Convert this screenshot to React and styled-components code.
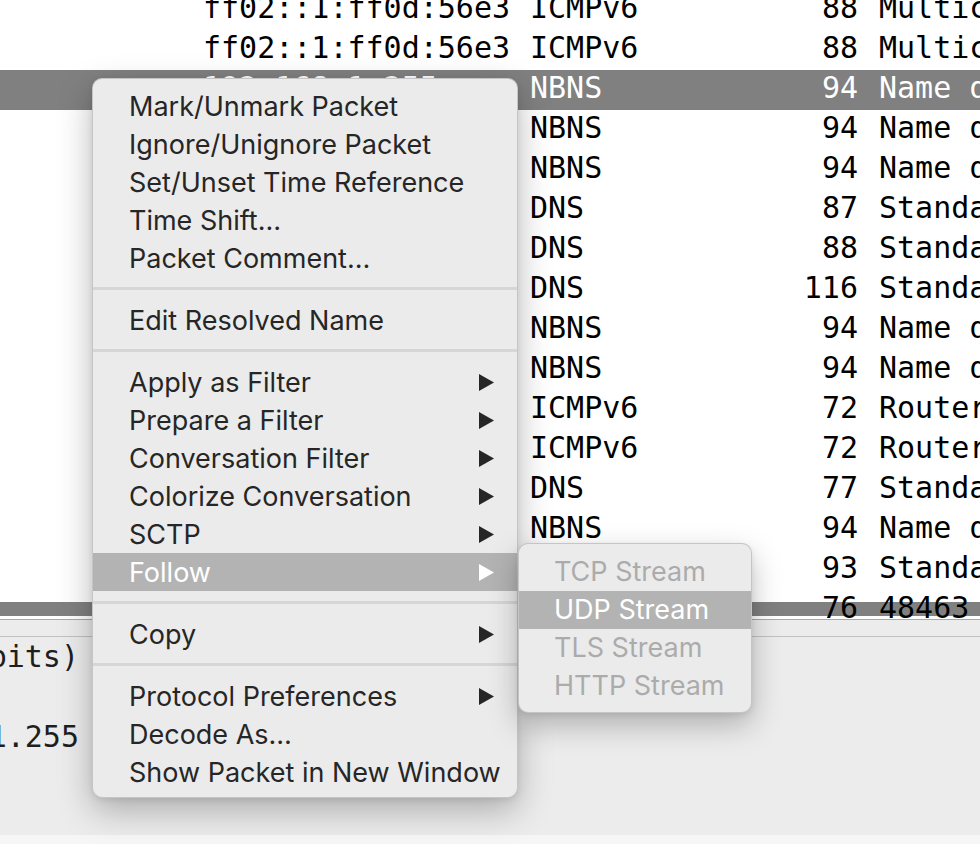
import React from 'react'
import styled, { createGlobalStyle } from 'styled-components'

const GlobalStyle = createGlobalStyle`
  html, body {
    margin: 0;
    padding: 0;
    overflow: hidden;
    background: #ececec;
  }
  * {
    box-sizing: border-box;
  }
`

const packets = [
  { dst: 'ff02::1:ff0d:56e3', proto: 'ICMPv6', len: 88, info: 'Multicast Listener Report Message v2' },
  { dst: 'ff02::1:ff0d:56e3', proto: 'ICMPv6', len: 88, info: 'Multicast Listener Report Message v2' },
  { dst: '192.168.1.255', proto: 'NBNS', len: 94, info: 'Name query NB WPAD<00>', selected: true },
  { dst: '192.168.1.255', proto: 'NBNS', len: 94, info: 'Name query NB WPAD<00>' },
  { dst: '192.168.1.255', proto: 'NBNS', len: 94, info: 'Name query NB WPAD<00>' },
  { dst: '192.168.1.1', proto: 'DNS', len: 87, info: 'Standard query 0x1a2b A' },
  { dst: '192.168.1.1', proto: 'DNS', len: 88, info: 'Standard query 0x3c4d A' },
  { dst: '192.168.1.6', proto: 'DNS', len: 116, info: 'Standard query response' },
  { dst: '192.168.1.255', proto: 'NBNS', len: 94, info: 'Name query NB WPAD<00>' },
  { dst: '192.168.1.255', proto: 'NBNS', len: 94, info: 'Name query NB WPAD<00>' },
  { dst: 'ff02::2', proto: 'ICMPv6', len: 72, info: 'Router Solicitation' },
  { dst: 'ff02::2', proto: 'ICMPv6', len: 72, info: 'Router Solicitation' },
  { dst: '192.168.1.1', proto: 'DNS', len: 77, info: 'Standard query 0x5e6f A' },
  { dst: '192.168.1.255', proto: 'NBNS', len: 94, info: 'Name query NB WPAD<00>' },
  { dst: '192.168.1.1', proto: 'DNS', len: 93, info: 'Standard query 0x7a8b AAAA' },
  { dst: '239.255.255.250', proto: 'UDP', len: 76, info: '48463 → 1900 Len=34' },
]

const menuItems = [
  { label: 'Mark/Unmark Packet' },
  { label: 'Ignore/Unignore Packet' },
  { label: 'Set/Unset Time Reference' },
  { label: 'Time Shift…' },
  { label: 'Packet Comment…' },
  { separator: true },
  { label: 'Edit Resolved Name' },
  { separator: true },
  { label: 'Apply as Filter', sub: true },
  { label: 'Prepare a Filter', sub: true },
  { label: 'Conversation Filter', sub: true },
  { label: 'Colorize Conversation', sub: true },
  { label: 'SCTP', sub: true },
  { label: 'Follow', sub: true, active: true },
  { separator: true },
  { label: 'Copy', sub: true },
  { separator: true },
  { label: 'Protocol Preferences', sub: true },
  { label: 'Decode As…' },
  { label: 'Show Packet in New Window' },
]

const followItems = [
  { label: 'TCP Stream', disabled: true },
  { label: 'UDP Stream', active: true },
  { label: 'TLS Stream', disabled: true },
  { label: 'HTTP Stream', disabled: true },
]

const Arrow = () => (
  <svg width="15" height="17" viewBox="0 0 15 17">
    <polygon points="0,0 15,8.5 0,17" fill="currentColor" />
  </svg>
)

export default function App() {
  return (
    <Window>
      <GlobalStyle />
      <PacketList>
        <Rows>
          {packets.map((p, i) => (
            <Row key={i} selected={p.selected}>
              <span />
              <Cell>{p.dst}</Cell>
              <Cell>{p.proto}</Cell>
              <Length>{p.len}</Length>
              <Info>{p.info}</Info>
            </Row>
          ))}
        </Rows>
      </PacketList>
      <Splitter />
      <DetailPane>
        <DetailLine>
          <DetailText>▸ Frame 3: 94 bytes on wire (752 bits), 94 bytes captured (752 bits)</DetailText>
        </DetailLine>
        <DetailLine />
        <DetailLine>
          <DetailText>▸ Internet Protocol Version 4, Src: 192.168.1.6, Dst: 192.168.1.255</DetailText>
        </DetailLine>
      </DetailPane>
      <BottomPane />

      <Menu>
        {menuItems.map((item, i) =>
          item.separator ? (
            <Separator key={i} />
          ) : (
            <MenuItem key={i} active={item.active}>
              <span>{item.label}</span>
              {item.sub && (
                <ArrowBox>
                  <Arrow />
                </ArrowBox>
              )}
              {item.label === 'Follow' && (
                <SubMenu>
                  {followItems.map((s) => (
                    <SubItem key={s.label} active={s.active} disabled={s.disabled}>
                      {s.label}
                    </SubItem>
                  ))}
                </SubMenu>
              )}
            </MenuItem>
          )
        )}
      </Menu>
    </Window>
  )
}

const Window = styled.div`
  position: relative;
  width: 980px;
  height: 844px;
  display: flex;
  flex-direction: column;
  overflow: hidden;
  background: #ececec;
`

const PacketList = styled.div`
  height: 620px;
  flex: none;
  overflow: hidden;
  border-bottom: 1px solid #a9a9a9;
  background: linear-gradient(
    to bottom,
    #ffffff 0,
    #ffffff 602px,
    #808080 602px,
    #808080 616px,
    #ffffff 616px
  );
`

const Rows = styled.div`
  margin-top: -10px;
`

const Row = styled.div`
  display: grid;
  grid-template-columns: 203px 327px 256px 72px 1fr;
  height: 40px;
  line-height: 36px;
  font-family: "DejaVu Sans Mono", "Liberation Mono", monospace;
  font-size: 30px;
  white-space: nowrap;
  color: ${(p) => (p.selected ? '#ffffff' : '#000000')};
  background: ${(p) => (p.selected ? '#808080' : 'transparent')};
`

const Cell = styled.span`
  overflow: hidden;
`

const Length = styled.span`
  text-align: right;
`

const Info = styled.span`
  padding-left: 21px;
  overflow: hidden;
`

const Splitter = styled.div`
  height: 17px;
  flex: none;
  background: #ececec;
  border-bottom: 1px solid #c2c2c2;
`

const DetailPane = styled.div`
  height: 198px;
  flex: none;
  padding-top: 1px;
  background: #ececec;
`

const DetailLine = styled.div`
  height: 40px;
  width: 79px;
  display: flex;
  justify-content: flex-end;
  overflow: hidden;
`

const DetailText = styled.span`
  flex: none;
  white-space: nowrap;
  line-height: 38px;
  font-family: "DejaVu Sans Mono", "Liberation Mono", monospace;
  font-size: 30px;
  color: #1e1e1e;
`

const BottomPane = styled.div`
  flex: 1;
  background: #f6f6f6;
`

const Menu = styled.div`
  position: absolute;
  top: 78px;
  left: 92px;
  width: 426px;
  padding: 8px 0 6px;
  background: #ebebeb;
  border: 1px solid rgba(0, 0, 0, 0.16);
  border-radius: 10px;
  box-shadow: 0 12px 34px rgba(0, 0, 0, 0.28), 0 2px 6px rgba(0, 0, 0, 0.08);
  font-family: Inter, "Noto Sans", sans-serif;
  font-size: 27px;
  color: #262626;
`

const MenuItem = styled.div`
  position: relative;
  display: flex;
  align-items: center;
  height: 38px;
  padding: 0 23px 0 36px;
  white-space: nowrap;
  color: ${(p) => (p.active ? '#ffffff' : '#262626')};
  background: ${(p) => (p.active ? '#b3b3b3' : 'transparent')};
`

const ArrowBox = styled.span`
  display: flex;
  margin-left: auto;
  color: inherit;
`

const Separator = styled.div`
  height: 3px;
  margin: 10px 0 11px;
  background: #d6d6d6;
`

const SubMenu = styled.div`
  position: absolute;
  top: -10px;
  left: calc(100% + 1px);
  width: 234px;
  padding: 9px 0 7px;
  background: #ebebeb;
  border: 1px solid rgba(0, 0, 0, 0.16);
  border-radius: 10px;
  box-shadow: 0 12px 30px rgba(0, 0, 0, 0.26), 0 2px 6px rgba(0, 0, 0, 0.08);
`

const SubItem = styled.div`
  height: 38px;
  line-height: 38px;
  padding-left: 35px;
  white-space: nowrap;
  color: ${(p) => (p.active ? '#ffffff' : p.disabled ? '#ababab' : '#262626')};
  background: ${(p) => (p.active ? '#b3b3b3' : 'transparent')};
`
